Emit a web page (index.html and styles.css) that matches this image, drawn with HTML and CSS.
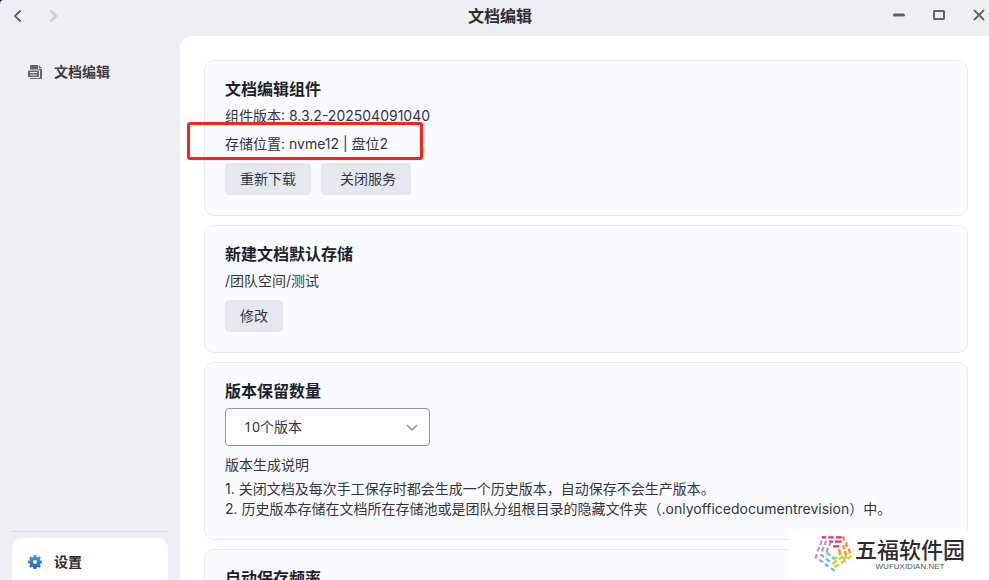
FILE: index.html
```html
<!DOCTYPE html>
<html lang="zh-CN">
<head>
<meta charset="utf-8">
<title>文档编辑</title>
<link rel="stylesheet" href="styles.css">
</head>
<body>
<div class="window">
  <header class="titlebar">
    <nav class="history">
      <button class="icon-button" aria-label="后退"><svg width="16" height="16" viewBox="0 0 16 16"><path d="M11.500 2.500 6 8l5.500 5.500" fill="none" stroke="#5f6064" stroke-width="1.800"/></svg></button>
      <button class="icon-button" aria-label="前进" disabled><svg width="16" height="16" viewBox="0 0 16 16"><path d="M5.500 2.500 11 8l-5.500 5.500" fill="none" stroke="#c6c7ca" stroke-width="2"/></svg></button>
    </nav>
    <h1 class="window-title">文档编辑</h1>
    <div class="controls">
      <button class="icon-button" aria-label="最小化"><svg width="16" height="16" viewBox="0 0 16 16"><path d="M3.500 7h9" stroke="#606166" stroke-width="3" stroke-linecap="round"/></svg></button>
      <button class="icon-button" aria-label="最大化"><svg width="16" height="16" viewBox="0 0 16 16"><rect x="3" y="3" width="10" height="8" rx=".5" fill="none" stroke="#606166" stroke-width="2"/></svg></button>
      <button class="icon-button" aria-label="关闭"><svg width="16" height="16" viewBox="0 0 16 16"><path d="m3.500 2.500 9 9m0-9-9 9" stroke="#606166" stroke-width="1.800" stroke-linecap="round"/></svg></button>
    </div>
  </header>

  <aside class="sidebar">
    <a class="nav-item" href="#editor">
      <svg width="14" height="14" viewBox="0 0 14 14"><path d="M3 0h7v4h4v9a1 1 0 0 1-1 1H2V1a1 1 0 0 1 1-1Z" fill="#656568"/><path d="m10.800 0 3.200 3.200h-3.200V0Z" fill="#656568"/><rect x="-.5" y="4.500" width="12.500" height="8.500" rx="1.500" fill="#eeeff5"/><rect x="0" y="5.500" width="11" height="6.500" rx="1" fill="#656568"/><path d="M2 7.500h7M2 10h7" fill="none" stroke="#eeeff5" stroke-width="1"/></svg>
      文档编辑
    </a>
    <div class="sidebar-footer">
      <a class="nav-item nav-item-active" href="#settings">
        <svg width="14" height="14" viewBox="0 0 14 14"><defs><linearGradient id="gear" x2="0" y2="1"><stop stop-color="#4ca0dc"/><stop offset="1" stop-color="#2463b5"/></linearGradient></defs><path fill="url(#gear)" fill-rule="evenodd" d="M5.700 0h2.600l.5 2 1 .4L11.500 1.300l1.300 1.400-1 1.700.4 1 1.800.4v2.500l-1.800.5-.4 1 1 1.700-1.300 1.300-1.700-1-1 .4-.5 1.800H5.700l-.5-1.800-1-.4-1.700 1-1.300-1.300 1-1.700-.4-1L0 8.300V5.800l1.800-.4.4-1-1-1.700 1.300-1.400 1.700 1.100 1-.4ZM7 5a2 2 0 1 0 0 4 2 2 0 0 0 0-4Z"/></svg>
        设置
      </a>
    </div>
  </aside>

  <main class="content">
    <section class="card">
      <h2>文档编辑组件</h2>
      <p class="line">组件版本: 8.3.2-202504091040</p>
      <p class="line marked">存储位置: nvme12 | 盘位2</p>
      <div class="actions">
        <button class="button">重新下载</button>
        <button class="button button-stop">关闭服务</button>
      </div>
    </section>

    <section class="card">
      <h2>新建文档默认存储</h2>
      <p class="line">/团队空间/测试</p>
      <div class="actions"><button class="button">修改</button></div>
    </section>

    <section class="card">
      <h2><label for="versions">版本保留数量</label></h2>
      <div class="select-box">
        <select id="versions"><option>10个版本</option></select>
        <svg width="12" height="8" viewBox="0 0 12 8"><path d="m1 2 5 5 5-5" fill="none" stroke="#929398" stroke-width="1.500"/></svg>
      </div>
      <p class="line note-title">版本生成说明</p>
      <p class="note">1. 关闭文档及每次手工保存时都会生成一个历史版本，自动保存不会生产版本。</p>
      <p class="note">2. 历史版本存储在文档所在存储池或是团队分组根目录的隐藏文件夹（.onlyofficedocumentrevision）中。</p>
    </section>

    <section class="card">
      <h2>自动保存频率</h2>
    </section>
  </main>

  <div class="watermark">
    <svg width="38" height="38" viewBox="9 12 114 114" fill="none" stroke-width="7">
      <path stroke="#e92d78" d="M32 19h14m6 0h16m7 0h17M54 32h12m6 0h20M66 46h19"/>
      <path stroke="#f7941e" d="m96 16 4 13m5 5 3 13m5 6 4 14M97 42l3 13m2 5 3 14M84 54l4 19"/>
      <path stroke="#b99ad0" d="m32 29-4 13m-4 6-4 13m-3 8-3 14M45 29l-4 13m-4 6-4 14M58 34l-3 11m-4 5-4 14"/>
      <path stroke="#62bfe8" d="m25 86 11 8m6 5 10 8m8 5 11 7M28 70l11 8m6 5 12 9M47 65l11 9m5 4 9 7"/>
      <path stroke="#bfd02f" d="m123 75-13 8m-6 5-14 8m-6 4-14 8M97 76l-13 8m-6 5-14 9M108 77l-12 7M79 78l-13 8"/>
    </svg>
    <div class="brand">
      <span class="brand-name">五福软件园</span>
      <span class="brand-site">WUFUXIDIAN.NET</span>
    </div>
  </div>
</div>
</body>
</html>
```

FILE: styles.css
```css
*, *::after { box-sizing: border-box; }

body {
  margin: 0;
  background: #101c3c;
  color: #33353d;
  font: 14px/20px Inter, "Noto Sans CJK SC", sans-serif;
}

h1, h2, p { margin: 0; }

button, select { font: inherit; color: inherit; }

.window {
  position: relative;
  display: grid;
  grid-template-columns: 180px minmax(0, 1fr);
  grid-template-rows: 36px minmax(0, 1fr);
  height: 100vh;
  overflow: hidden;
  background: #eeeff5;
  border-top-left-radius: 4px;
}

.titlebar {
  grid-column: 1 / -1;
  display: grid;
  grid-template-columns: 1fr auto 1fr;
  align-items: center;
  padding: 0 2px 4px 13px;
}

.history { display: flex; gap: 20px; margin-left: -4px; }

.controls { display: flex; justify-content: flex-end; gap: 24px; }

.window-title {
  font-size: 16px;
  line-height: 24px;
  font-weight: 700;
  color: #2c2d33;
}

.icon-button {
  display: flex;
  padding: 0;
  border: 0;
  background: none;
}

.sidebar {
  display: flex;
  flex-direction: column;
  justify-content: space-between;
  padding: 12px 12px 0;
}

.nav-item {
  display: flex;
  align-items: center;
  gap: 12px;
  height: 48px;
  padding: 0 16px;
  border-radius: 10px;
  color: #3c3c3e;
  font-weight: 700;
  text-decoration: none;
}

.nav-item-active { background: #fff; color: #2c2c2e; }

.sidebar-footer {
  padding-top: 6px;
  margin-bottom: -6px;
  border-top: 1px solid #d9dae0;
}

.content {
  display: flex;
  flex-direction: column;
  gap: 9px;
  padding: 24px 21px 0 24px;
  overflow: hidden;
  background: #fff;
  border-top-left-radius: 12px;
}

.card {
  flex: none;
  padding: 15px 20px 20px;
  border: 1px solid #e9ebf2;
  border-radius: 10px;
  background: #fbfcff;
}

.card h2 {
  font-size: 16px;
  line-height: 26px;
  font-weight: 700;
  color: #1c1e2a;
}

.line { line-height: 28px; }

.marked { position: relative; }

.marked::after {
  content: "";
  position: absolute;
  top: -8px;
  left: -38px;
  width: 236px;
  height: 38px;
  border: 3px solid #fb2419;
  border-radius: 3px;
}

.actions { display: flex; gap: 10px; margin-top: 5px; }

.button {
  height: 32px;
  padding: 0 15px;
  border: 0;
  border-radius: 4px;
  background: #e6e8f0;
}

.button-stop { padding-left: 19px; }

.select-box {
  display: flex;
  align-items: center;
  width: 205px;
  height: 38px;
  margin-top: 4px;
  padding-right: 11px;
  border: 1px solid #929398;
  border-radius: 4px;
  background: #fff;
}

.select-box select {
  flex: 1;
  height: 36px;
  padding: 0 18px;
  border: 0;
  background: none;
  appearance: none;
  font-family: "Noto Sans", "Noto Sans CJK SC", sans-serif;
}

.note-title { margin-top: 5px; }

.watermark {
  position: absolute;
  right: 0;
  bottom: 0;
  display: flex;
  align-items: center;
  gap: 3px;
  width: 200px;
  height: 50px;
  padding-left: 25px;
  padding-bottom: 3px;
  background: #fff;
}

.brand { display: flex; flex-direction: column; align-items: center; }

.brand-name {
  font-size: 22px;
  line-height: 26px;
  font-weight: 500;
  color: #2b2b2b;
}

.brand-site {
  font: 8px/8px "Liberation Sans", sans-serif;
  color: #555;
}
```
